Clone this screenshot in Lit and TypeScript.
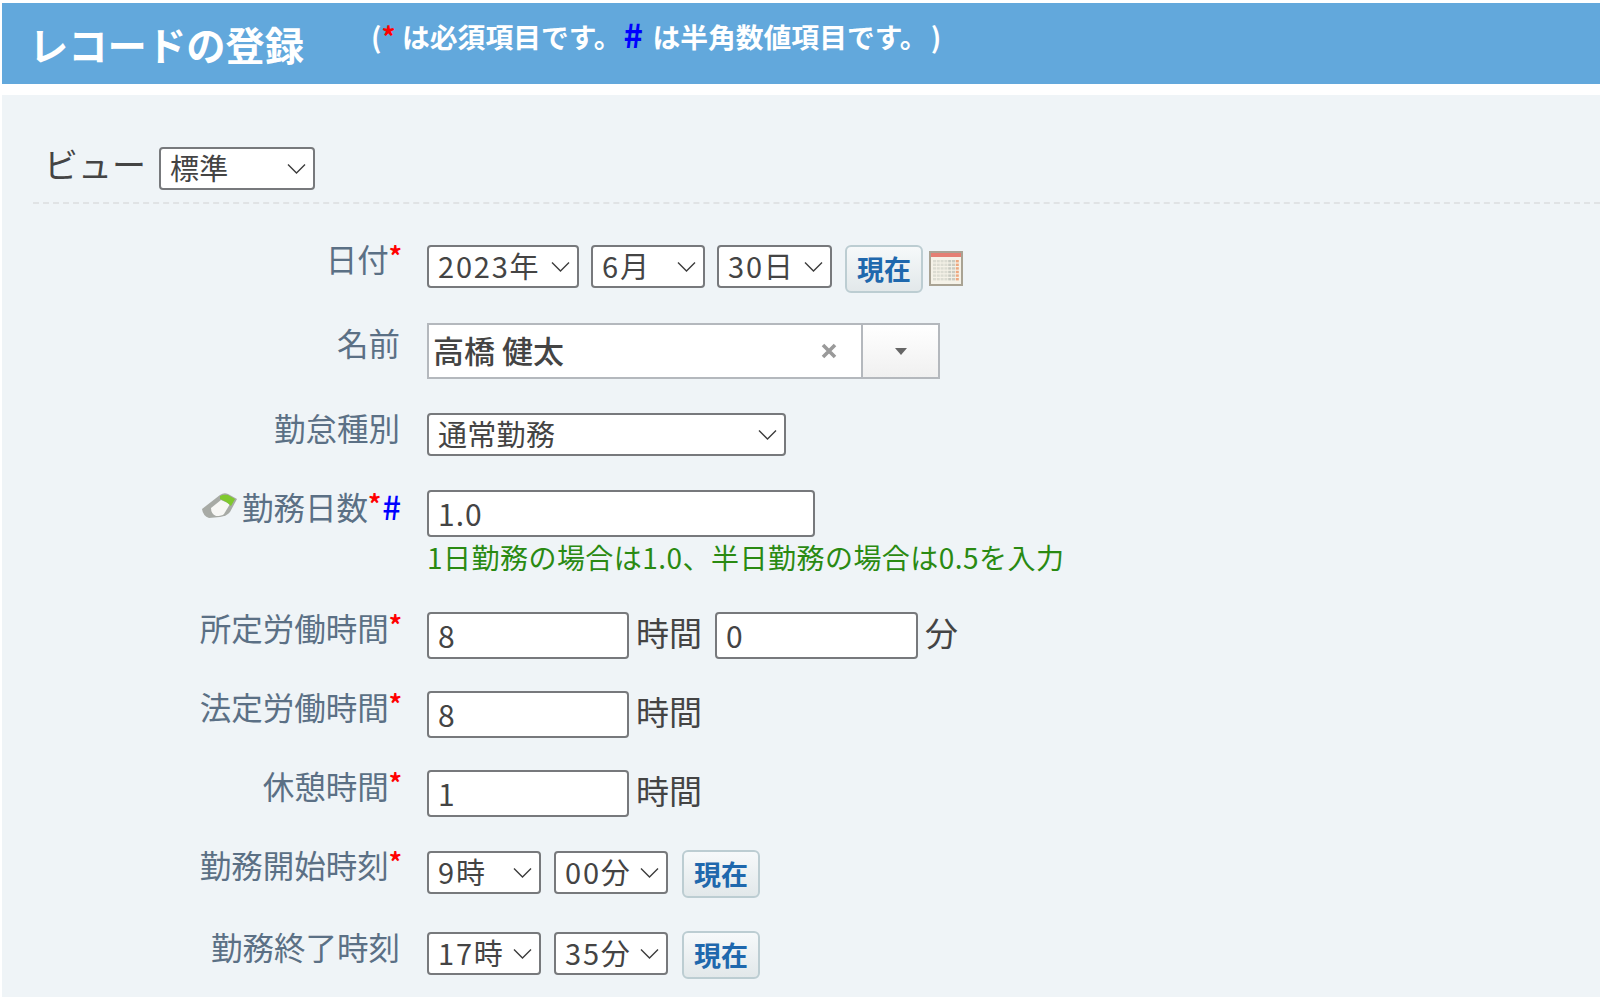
import { LitElement, html, css, svg } from "lit";
import { customElement } from "lit/decorators.js";

const chevron = svg`<path d="M1 1.5 L9.5 10 L18 1.5" fill="none" stroke="#3c3c3c" stroke-width="1.4"/>`;

@customElement("app-root")
export class AppRoot extends LitElement {
  static styles = css`
    :host { display: block; width: 1600px; height: 1000px; overflow: hidden; background: #fff;
      font-family: "Noto Sans CJK JP", "Noto Sans", sans-serif; color: #444; }
    .page { padding: 3px 0 0 2px; display: flex; flex-direction: column; height: 997px; box-sizing: border-box; }
    .head { height: 81px; background: #62a8dc; display: flex; align-items: flex-start; padding-left: 27px; color: #fff; flex: none; box-sizing: border-box; }
    .title { font-size: 39.3px; font-weight: 700; line-height: 81px; white-space: nowrap; }
    .note { margin-left: 67px; font-size: 27.8px; font-weight: 700; line-height: 40px; margin-top: 11px; white-space: nowrap; }
    .note .r { color: #f00; } .note .b { color: #00f; margin: 0 3px 0 2px; font-size: 33px; line-height: 40px; }
    .note .close { margin-left: 17px; }
    .panel { margin-top: 11px; flex: 1; background: #eff4f7; padding-top: 52px; min-height: 0; }
    .view { display: flex; align-items: center; padding-left: 42px; gap: 13px; font-size: 34px; line-height: 42px; color: #444; }
    .view > span:first-child { margin-top: -10px; }
    .rule { margin: 12px 0 0 31px; border-top: 2px dashed #e0e3e5; }
    .form { display: flex; flex-direction: column; padding-top: 38px; }
    .row { display: grid; grid-template-columns: 400px 1fr; column-gap: 25px; align-items: start; }
    .g27 { margin-top: 27px; } .g31 { margin-top: 31px; } .g33 { margin-top: 33px; } .g34 { margin-top: 34px; }
    .label { font-size: 31.5px; line-height: 36px; color: #5b7085; display: flex; justify-content: flex-end; align-items: center; white-space: nowrap; margin-top: -2px; }
    .label.m4 { margin-top: 4px; } .label.m1 { margin-top: -1px; }
    .label.plain { padding-right: 2px; }
    .label .r { color: #f00; font-size: 26px; font-weight: 700; align-self: flex-start; line-height: 30px; }
    .label .b { color: #00f; font-size: 33px; font-weight: 500; margin-left: 1px; margin-right: 1px; }
    .label svg { margin-right: 4px; }
    .ctrl { display: flex; align-items: flex-start; }
    .off3 { margin-top: 3px; } .off1 { margin-top: 1px; }
    .sel { position: relative; display: block; flex: none; }
    select { appearance: none; -webkit-appearance: none; width: 100%; height: 43px; box-sizing: border-box; display: block;
      background: #fff; border: 2px solid #77797c; border-radius: 4px; font: inherit; font-size: 29px; letter-spacing: 0.3px; line-height: 36px;
      color: #444; padding: 0 0 4px 9px; margin: 0; }
    select.num { letter-spacing: 1.8px; }
    .sel svg { position: absolute; right: 9px; top: 16px; pointer-events: none; }
    .w156 { width: 156px; } .w152 { width: 152px; } .w114 { width: 114px; } .w115 { width: 115px; } .w359 { width: 359px; }
    .gap12 { margin-left: 12px; } .gap13 { margin-left: 13px; }
    input { box-sizing: border-box; display: block; height: 47px; background: #fff; border: 2px solid #77797c; border-radius: 4px;
      font: inherit; font-size: 30px; letter-spacing: 1px; color: #444; padding: 0 0 2px 9px; margin: 0; }
    .i388 { width: 388px; } .i202 { width: 202px; } .i203 { width: 203px; }
    .unit { font-size: 33px; line-height: 47px; margin: -3px 13px 0 7px; color: #444; white-space: nowrap; }
    .unit.last { margin-right: 0; }
    button.now { width: 78px; height: 48px; box-sizing: border-box; border: 2px solid #bccdd2; border-radius: 6px; background: linear-gradient(#f6f9fa, #e2e8ea);
      color: #1f68ad; font: inherit; font-size: 27px; font-weight: 700; padding: 0; margin: -1px 0 0 14px; line-height: 42px; flex: none; }
    button.now.tight { margin: 0 0 0 13px; }
    .cal { margin: 6px 0 0 6px; flex: none; }
    .combo { width: 513px; height: 56px; box-sizing: border-box; border: 2px solid #b4b8bd; display: flex; background: #fff; }
    .combo .val { flex: 1; display: flex; align-items: center; padding: 0 0 4px 4px; font-size: 31px; font-weight: 500; color: #444; }
    .combo .val span { flex: 1; }
    .combo .val svg { margin: 4px 23px 0 0; }
    .combo .drop { width: 75px; flex: none; border-left: 2px solid #b4b8bd; background: linear-gradient(#fff, #f0f0f0); display: flex; align-items: center; justify-content: center; }
    .hint { font-size: 28px; letter-spacing: 0.47px; line-height: 36px; color: #2a8a12; margin: 2px 0; white-space: nowrap; }
  `;

  private sel(text: string, w: string, extra = "") {
    return html`<span class="sel ${w} ${extra}"><select class=${/\d/.test(text) ? "num" : ""}><option>${text}</option></select><svg width="19" height="12" viewBox="0 0 19 12">${chevron}</svg></span>`;
  }

  private label(t: string, req = true, num = false, icon = false, cls = "") {
    return html`<div class="label ${cls} ${req ? "" : "plain"}">
      ${icon ? html`<svg width="36" height="26" viewBox="0 0 36 26">
        <path d="M0 16 L18 2 Q22 -1 26 1 L35 6 L28 19 Q25 23 18 24 L7 25 Q1 23 0 16Z" fill="#a7aaa5"/>
        <path d="M9 15 L19 7 L28 11 L22 21 Q20 23 14 23 Q9 21 9 15Z" fill="#f7f7f5"/>
        <path d="M18 3 Q22 1 26 2 L33 6 L29 13 Q24 8 18 6Z" fill="#7fc92e"/>
      </svg>` : ""}
      <span>${t}</span>${req ? html`<span class="r">*</span>` : ""}${num ? html`<span class="b">#</span>` : ""}
    </div>`;
  }

  render() {
    const cells = [];
    for (let y = 0; y < 6; y++) for (let x = 0; x < 7; x++) cells.push(svg`<rect x="${4 + x * 3.8}" y="${9 + y * 3.6}" width="3" height="2.4" fill="${x === 6 ? "#eda77f" : x > 3 ? "#c9cbc2" : "#dcdcd2"}"/>`);
    return html`
      <div class="page">
        <div class="head">
          <div class="title">レコードの登録</div>
          <div class="note">(<span class="r">*</span> は必須項目です。<span class="b">#</span> は半角数値項目です。<span class="close">)</span></div>
        </div>
        <div class="panel">
          <div class="view"><span>ビュー</span>${this.sel("標準", "w156")}</div>
          <div class="rule"></div>
          <div class="form">
            <div class="row">
              ${this.label("日付")}
              <div class="ctrl off3">
                ${this.sel("2023年", "w152")}${this.sel("6月", "w114", "gap12")}${this.sel("30日", "w115", "gap12")}
                <button class="now tight">現在</button>
                <svg class="cal" width="34" height="35" viewBox="0 0 34 35">
                  <rect width="34" height="35" fill="#a9a394"/>
                  <rect x="2" y="2" width="30" height="31" fill="#f5f2e8"/>
                  <rect x="2" y="2" width="30" height="4" fill="#e57f73"/>
                  ${cells}
                </svg>
              </div>
            </div>
            <div class="row g27">
              ${this.label("名前", false, false, false, "m4")}
              <div class="ctrl off3">
                <div class="combo">
                  <div class="val"><span>高橋 健太</span>
                    <svg width="18" height="18" viewBox="0 0 18 18"><path d="M3 3 L15 15 M15 3 L3 15" stroke="#9a9a9a" stroke-width="3.6"/></svg>
                  </div>
                  <div class="drop"><svg width="12" height="7" viewBox="0 0 12 7"><path d="M0 0 H12 L6 7Z" fill="#666"/></svg></div>
                </div>
              </div>
            </div>
            <div class="row g31">
              ${this.label("勤怠種別", false, false, false, "m1")}
              <div class="ctrl off3">${this.sel("通常勤務", "w359")}</div>
            </div>
            <div class="row g33">
              ${this.label("勤務日数", true, true, true, "m1")}
              <div class="off1">
                <input class="i388" value="1.0" />
                <div class="hint">1日勤務の場合は1.0、半日勤務の場合は0.5を入力</div>
              </div>
            </div>
            <div class="row g34">
              ${this.label("所定労働時間")}
              <div class="ctrl off1">
                <input class="i202" value="8" /><span class="unit">時間</span>
                <input class="i203" value="0" /><span class="unit last">分</span>
              </div>
            </div>
            <div class="row g31">
              ${this.label("法定労働時間")}
              <div class="ctrl off1"><input class="i202" value="8" /><span class="unit">時間</span></div>
            </div>
            <div class="row g31">
              ${this.label("休憩時間")}
              <div class="ctrl off1"><input class="i202" value="1" /><span class="unit">時間</span></div>
            </div>
            <div class="row g31">
              ${this.label("勤務開始時刻")}
              <div class="ctrl off3">${this.sel("9時", "w114")}${this.sel("00分", "w114", "gap13")}<button class="now">現在</button></div>
            </div>
            <div class="row g31">
              ${this.label("勤務終了時刻", false, false, false, "m1")}
              <div class="ctrl off3">${this.sel("17時", "w114")}${this.sel("35分", "w114", "gap13")}<button class="now">現在</button></div>
            </div>
          </div>
        </div>
      </div>
    `;
  }
}
